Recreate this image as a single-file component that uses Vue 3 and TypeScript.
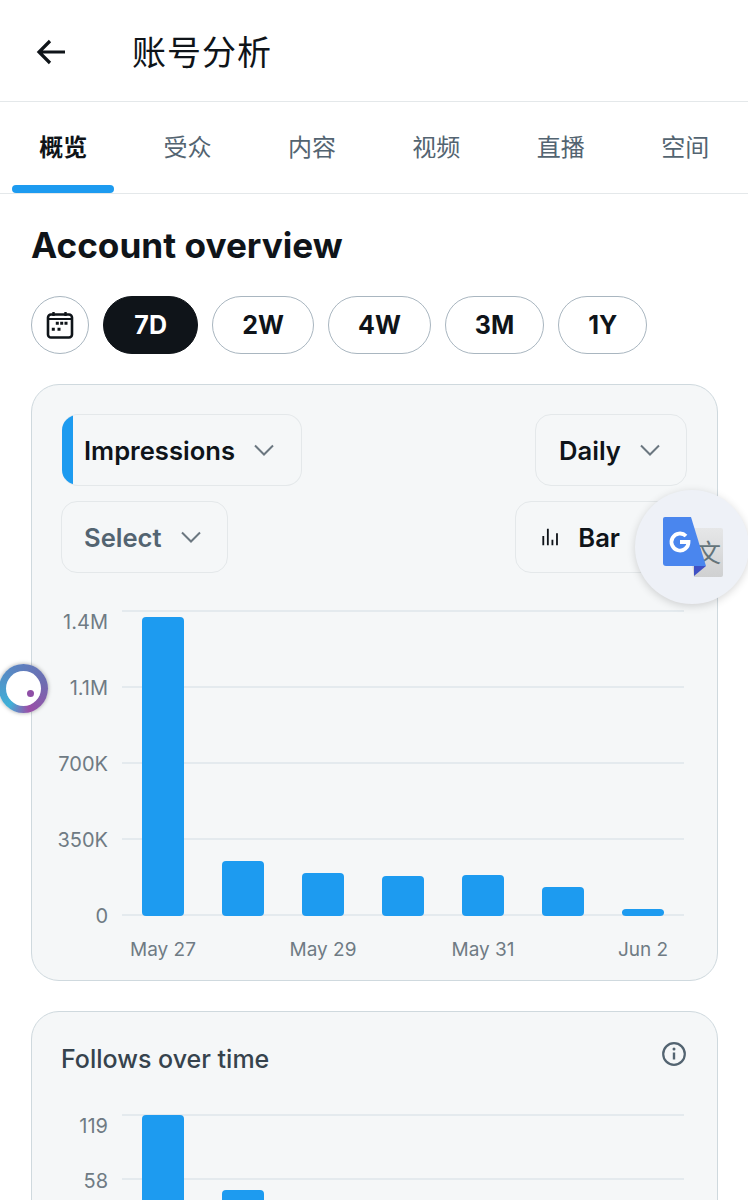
<script setup lang="ts">
import { ref } from 'vue'

const tabs = ['概览', '受众', '内容', '视频', '直播', '空间']
const ranges = ['7D', '2W', '4W', '3M', '1Y']
const activeTab = ref('概览')
const activeRange = ref('7D')

// chart coordinates are relative to the svg, which starts at the card's inner left edge
const overviewLines = [
  { y: 21, label: '1.4M', labelY: 31 },
  { y: 97, label: '1.1M', labelY: 97 },
  { y: 173, label: '700K', labelY: 173 },
  { y: 249, label: '350K', labelY: 249 },
  { y: 325, label: '0', labelY: 325 },
]
const overviewBars = [27, 271, 283, 286, 285, 297, 319]
const overviewDays = [
  { x: 131, label: 'May 27' },
  { x: 291, label: 'May 29' },
  { x: 451, label: 'May 31' },
  { x: 611, label: 'Jun 2' },
]

const followLines = [
  { y: 15, label: '119', labelY: 25 },
  { y: 79, label: '58', labelY: 80 },
]
const followBars = [15, 90]

const barX = (i: number) => 110 + i * 80
</script>

<template>
  <div class="page">
    <header class="topbar">
      <svg class="back" viewBox="0 0 30 26" width="30" height="26">
        <path d="M29 13H3M14 2 3 13l11 11" fill="none" stroke="#0f1419" stroke-width="3.2" />
      </svg>
      <h1 class="page-title">账号分析</h1>
    </header>

    <nav class="tabs">
      <div
        v-for="tab in tabs"
        :key="tab"
        class="tab"
        :class="{ active: tab === activeTab }"
        @click="activeTab = tab"
      >
        {{ tab }}
        <span v-if="tab === activeTab" class="tab-line" />
      </div>
    </nav>

    <main class="content">
      <h2 class="heading">Account overview</h2>

      <div class="pills">
        <button class="pill calendar">
          <svg viewBox="0 0 28 28" width="28" height="28">
            <rect x="2" y="3.500" width="24" height="23" rx="3" fill="none" stroke="#0f1419" stroke-width="2.600" />
            <path d="M2 8h24" stroke="#0f1419" stroke-width="2" />
            <path d="M7.500 1v4M19.500 1v4" stroke="#0f1419" stroke-width="2.400" />
            <path d="M9.800 12.300h3M14.200 12.300h3M18.500 12.300h3M5.800 18.300h3M11.500 18.300h3" stroke="#0f1419" stroke-width="3" />
          </svg>
        </button>
        <button
          v-for="r in ranges"
          :key="r"
          class="pill"
          :class="{ active: r === activeRange }"
          @click="activeRange = r"
        >
          {{ r }}
        </button>
      </div>

      <section class="card">
        <div class="controls">
          <div class="control-row">
            <div class="dropdown metric">
              <span>Impressions</span>
              <svg class="chev" viewBox="0 0 20 12" width="20" height="12"><path d="M1 1.500 10 10.500 19 1.500" /></svg>
            </div>
            <div class="dropdown daily">
              <span>Daily</span>
              <svg class="chev" viewBox="0 0 20 12" width="20" height="12"><path d="M1 1.500 10 10.500 19 1.500" /></svg>
            </div>
          </div>
          <div class="control-row">
            <div class="dropdown select">
              <span>Select</span>
              <svg class="chev" viewBox="0 0 20 12" width="20" height="12"><path d="M1 1.500 10 10.500 19 1.500" /></svg>
            </div>
            <div class="dropdown bar">
              <svg viewBox="0 0 20 20" width="20" height="20">
                <path d="M2.500 9v10M7.500 1v18M12.500 13v6M17.500 6v13" stroke="#0f1419" stroke-width="2" fill="none" />
              </svg>
              <span>Bar</span>
              <svg class="chev" viewBox="0 0 20 12" width="20" height="12"><path d="M1 1.500 10 10.500 19 1.500" /></svg>
            </div>
          </div>
        </div>

        <svg class="chart" viewBox="0 0 685 374" width="685" height="374">
          <g v-for="l in overviewLines" :key="l.label">
            <line x1="90" x2="652" :y1="l.y" :y2="l.y" class="grid" />
            <text x="76" :y="l.labelY + 8" text-anchor="end" class="axis">{{ l.label }}</text>
          </g>
          <rect
            v-for="(top, i) in overviewBars"
            :key="i"
            :x="barX(i)"
            :y="top"
            width="42"
            :height="326 - top"
            rx="4"
            class="column"
          />
          <text
            v-for="d in overviewDays"
            :key="d.label"
            :x="d.x"
            y="366"
            text-anchor="middle"
            class="axis day"
          >{{ d.label }}</text>
        </svg>
      </section>

      <section class="card follows">
        <div class="card-head">
          <h3>Follows over time</h3>
          <svg viewBox="0 0 24 24" width="24" height="24">
            <circle cx="12" cy="12" r="10.800" fill="none" stroke="#536471" stroke-width="2.200" />
            <path d="M12 10.500v7" stroke="#536471" stroke-width="2.400" />
            <circle cx="12" cy="7" r="1.500" fill="#536471" />
          </svg>
        </div>
        <svg class="chart" viewBox="0 0 685 140" width="685" height="140">
          <g v-for="l in followLines" :key="l.label">
            <line x1="90" x2="652" :y1="l.y" :y2="l.y" class="grid" />
            <text x="76" :y="l.labelY + 8" text-anchor="end" class="axis">{{ l.label }}</text>
          </g>
          <rect
            v-for="(top, i) in followBars"
            :key="i"
            :x="barX(i)"
            :y="top"
            width="42"
            :height="140 - top"
            rx="4"
            class="column"
          />
        </svg>
      </section>
    </main>

    <!-- floating overlays from other apps -->
    <div class="assistant"><span class="assistant-dot" /></div>

    <div class="translate">
      <svg viewBox="0 0 60 60" width="60" height="60">
        <defs>
          <linearGradient id="sheet" x1="0" y1="0" x2="0" y2="1">
            <stop offset="0" stop-color="#e6e7e8" />
            <stop offset="1" stop-color="#cfd0d1" />
          </linearGradient>
        </defs>
        <path d="M24 11h34a2 2 0 0 1 2 2v45a2 2 0 0 1-2 2H31z" fill="url(#sheet)" />
        <text x="33" y="45" class="wen">文</text>
        <path d="M2 0h26l15 49H3a3 3 0 0 1-3-3V2a2 2 0 0 1 2-2z" fill="#4a86ee" />
        <path d="M31 49h12L31 59z" fill="#3f51c4" />
        <path d="M23 19a8.500 8.500 0 1 0 2.500 6h-8.500" fill="none" stroke="#fff" stroke-width="3.800" />
      </svg>
    </div>
  </div>
</template>

<style>
html,
body {
  margin: 0;
  background: #fff;
}
</style>

<style scoped>
.page {
  position: relative;
  width: 748px;
  height: 1200px;
  overflow: hidden;
  background: #fff;
  color: #0f1419;
  font-family: Inter, "Noto Sans CJK SC", sans-serif;
}
.topbar {
  display: flex;
  align-items: center;
  height: 101px;
  padding-left: 36px;
  border-bottom: 1px solid #e4e8ea;
}
.back {
  margin-top: 2px;
}
.page-title {
  margin: 0 0 0 66px;
  font-size: 34px;
  font-weight: 400;
  letter-spacing: 1px;
}
.tabs {
  display: grid;
  grid-template-columns: repeat(6, 124.4px);
  height: 91px;
  padding-left: 1px;
  border-bottom: 1px solid #e4e8ea;
}
.tab {
  position: relative;
  display: flex;
  align-items: center;
  justify-content: center;
  padding-bottom: 4px;
  font-size: 24px;
  color: #536471;
}
.tab.active {
  color: #0f1419;
  font-weight: 700;
}
.tab-line {
  position: absolute;
  left: 11px;
  bottom: 0;
  width: 102px;
  height: 8px;
  border-radius: 4px;
  background: #1d9bf0;
}
.content {
  padding: 0 30px 0 31px;
}
.heading {
  margin: 29px 0 29px;
  font-size: 35.200px;
  line-height: 44px;
  font-weight: 700;
}
.pills {
  display: flex;
  gap: 14px;
  margin-bottom: 30px;
}
.pill {
  height: 58px;
  padding: 0 29px;
  border: 1px solid #a9b6c0;
  border-radius: 29px;
  background: #fff;
  color: #0f1419;
  font: 700 25px Inter, sans-serif;
}
.pill.active {
  padding: 0 30.350px;
  border-color: #0f1419;
  background: #0f1419;
  color: #fff;
}
.pill.calendar {
  display: flex;
  align-items: center;
  justify-content: center;
  width: 58px;
  padding: 0;
}
.card {
  box-sizing: border-box;
  width: 687px;
  height: 597px;
  border: 1px solid #cfd9de;
  border-radius: 28px;
  background: #f5f7f8;
}
.card.follows {
  height: 260px;
  margin-top: 30px;
}
.controls {
  display: flex;
  flex-direction: column;
  gap: 15px;
  padding: 29px 30px 17px 29px;
}
.control-row {
  display: flex;
  justify-content: space-between;
}
.dropdown {
  position: relative;
  display: flex;
  align-items: center;
  box-sizing: border-box;
  height: 72px;
  padding: 0 27px 0 22px;
  gap: 19px;
  overflow: hidden;
  border: 1px solid #e4e8ea;
  border-radius: 16px;
  font-size: 25.600px;
  font-weight: 600;
}
.dropdown.metric {
  width: 240px;
  margin-left: 1px;
  border-left: 0;
  padding-left: 22px;
}
.dropdown.metric::before {
  content: "";
  position: absolute;
  left: 0;
  top: 0;
  bottom: 0;
  width: 11px;
  background: #1d9bf0;
}
.dropdown.daily {
  width: 152px;
  padding-left: 23px;
}
.dropdown.select {
  width: 167px;
  color: #536471;
}
.dropdown.bar {
  width: 172px;
  padding-left: 25px;
}
.chev {
  flex: none;
}
.chev path {
  fill: none;
  stroke: #6b7780;
  stroke-width: 2;
}
.chart {
  display: block;
}
.grid {
  stroke: #e4eaee;
  stroke-width: 2;
}
.column {
  fill: #1d9bf0;
}
.axis {
  font-size: 20px;
  fill: #6f7b84;
}
.axis.day {
  font-size: 19px;
}
.card-head {
  display: flex;
  justify-content: space-between;
  align-items: flex-start;
  height: 88px;
  padding: 30px 31px 0 29px;
  box-sizing: border-box;
}
.card-head h3 {
  margin: 0;
  font-size: 25px;
  line-height: 34px;
  font-weight: 500;
  color: #36434d;
}
.card-head svg {
  flex: none;
}
.assistant {
  position: absolute;
  left: -1px;
  top: 664px;
  width: 49px;
  height: 49px;
  border-radius: 50%;
  background: conic-gradient(from 220deg, #3fb1d8, #5a86c2 30%, #6f6bb0 60%, #9a50a8 85%, #3fb1d8);
  box-shadow: 0 0 4px rgba(0, 0, 0, 0.35);
}
.assistant::before {
  content: "";
  position: absolute;
  inset: 7px;
  border-radius: 50%;
  background: #fff;
}
.assistant-dot {
  position: absolute;
  left: 28px;
  top: 26px;
  width: 7px;
  height: 7px;
  border-radius: 50%;
  background: #8f4fa6;
}
.translate {
  position: absolute;
  left: 635px;
  top: 490px;
  display: flex;
  align-items: center;
  justify-content: center;
  box-sizing: border-box;
  width: 114px;
  height: 114px;
  padding-left: 2px;
  border-radius: 50%;
  background: #eef1f7;
  box-shadow: 0 2px 8px rgba(0, 0, 0, 0.16);
}
.wen {
  font-size: 25px;
  fill: #64747a;
  font-family: "Noto Sans CJK SC", sans-serif;
}
</style>
